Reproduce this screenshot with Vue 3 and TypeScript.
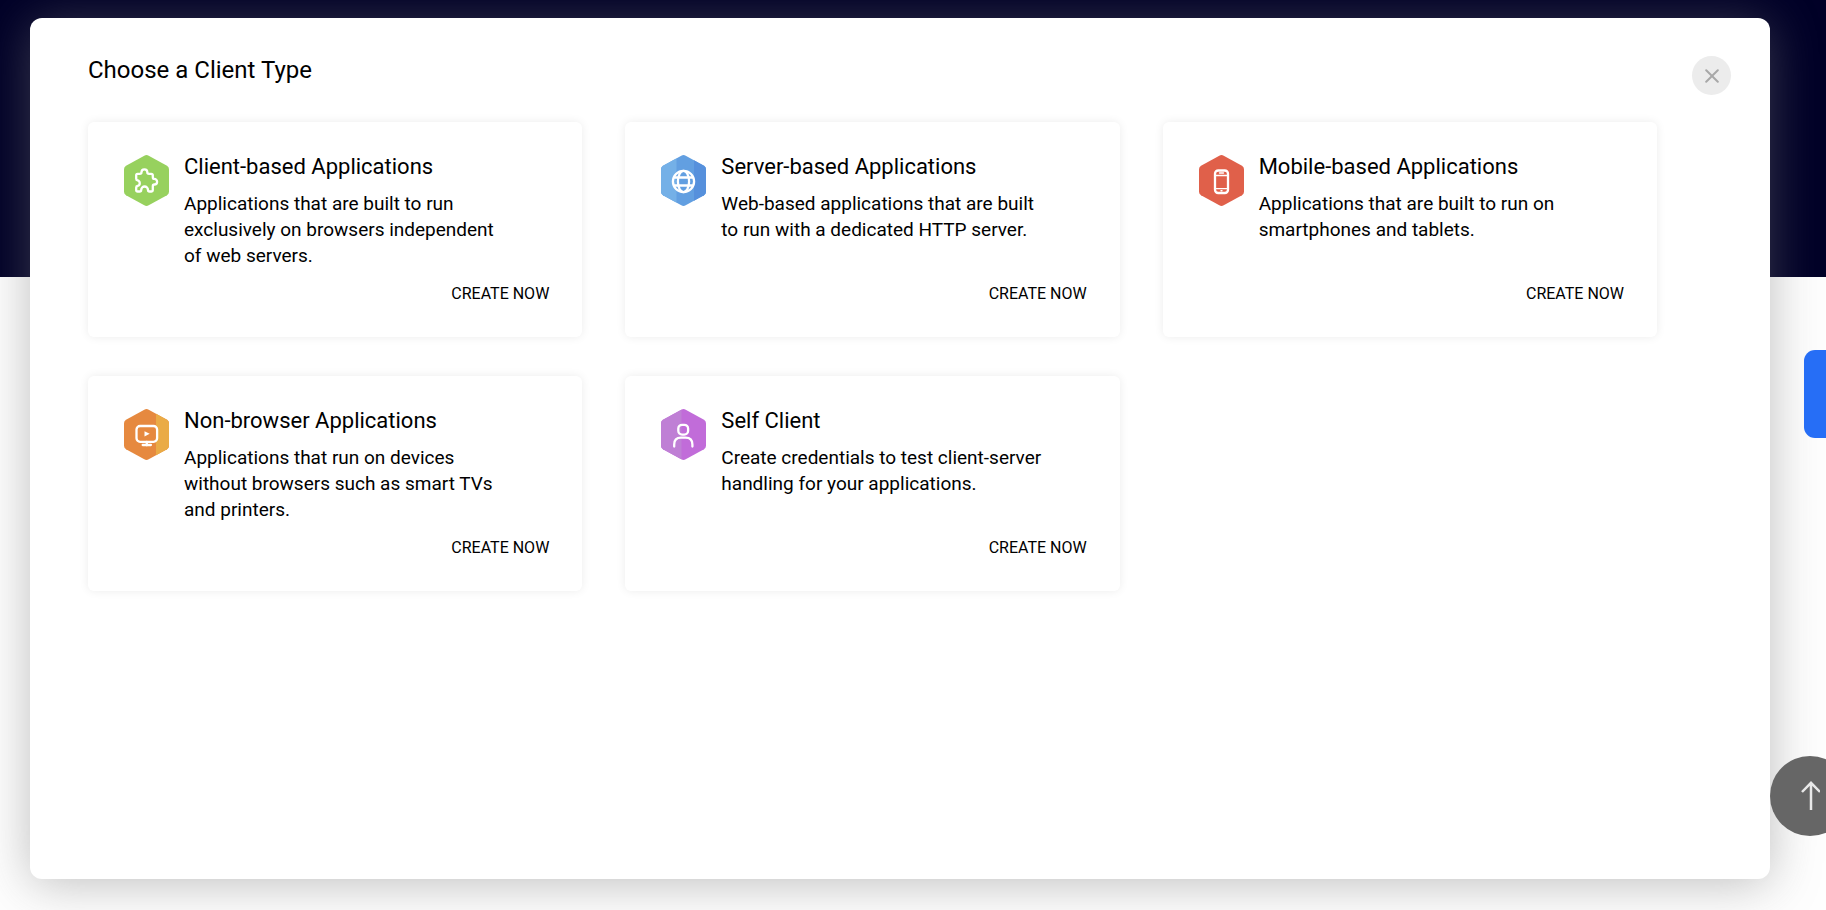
<script setup lang="ts">
type IconName = 'puzzle' | 'globe' | 'phone' | 'monitor' | 'person'

interface ClientType {
  title: string
  description: string
  icon: IconName
  base: string
  left?: string
  leftWidth?: number
  right?: string
  rightStart?: number
}

const clientTypes: ClientType[] = [
  {
    title: 'Client-based Applications',
    description: 'Applications that are built to run exclusively on browsers independent of web servers.',
    icon: 'puzzle',
    base: '#97d15e',
  },
  {
    title: 'Server-based Applications',
    description: 'Web-based applications that are built to run with a dedicated HTTP server.',
    icon: 'globe',
    base: '#629fe1',
    left: '#74b0e7',
    leftWidth: 15.5,
    right: '#5690dc',
    rightStart: 33,
  },
  {
    title: 'Mobile-based Applications',
    description: 'Applications that are built to run on smartphones and tablets.',
    icon: 'phone',
    base: '#e0604a',
  },
  {
    title: 'Non-browser Applications',
    description: 'Applications that run on devices without browsers such as smart TVs and printers.',
    icon: 'monitor',
    base: '#e6893f',
    right: '#eaab46',
    rightStart: 32,
  },
  {
    title: 'Self Client',
    description: 'Create credentials to test client-server handling for your applications.',
    icon: 'person',
    base: '#c16cd9',
    left: '#bf7fd5',
    leftWidth: 20.5,
  },
]

const hexagon =
  'M20.3 0.7 Q22.5 -0.5 24.7 0.7 L43 10.8 Q45 12 45 14.2 V36.8 Q45 39 43 40.2 L24.7 50.3 Q22.5 51.5 20.3 50.3 L2 40.2 Q0 39 0 36.8 V14.2 Q0 12 2 10.8 Z'
</script>

<template>
  <div class="page">
    <div class="hero"></div>

    <main class="dialog" role="dialog" aria-labelledby="dialog-title">
      <header class="dialog-header">
        <h1 id="dialog-title">Choose a Client Type</h1>
        <button class="close" type="button" aria-label="Close">
          <svg width="14" height="14" viewBox="0 0 14 14" aria-hidden="true">
            <path d="M1.2 1.2 12.8 12.8M12.8 1.2 1.2 12.8" />
          </svg>
        </button>
      </header>

      <div class="cards">
        <article v-for="(item, i) in clientTypes" :key="item.title" class="card">
          <svg class="badge" width="45" height="51" viewBox="0 0 45 51" aria-hidden="true">
            <defs>
              <clipPath :id="'hex-' + i"><path :d="hexagon" /></clipPath>
            </defs>
            <g :clip-path="`url(#hex-${i})`">
              <rect width="45" height="51" :fill="item.base" />
              <rect v-if="item.left" :width="item.leftWidth" height="51" :fill="item.left" />
              <rect v-if="item.right" :x="item.rightStart" width="20" height="51" :fill="item.right" />
            </g>
            <g class="glyph">
              <path
                v-if="item.icon === 'puzzle'"
                d="M13.4 18.8 h2.4 c1.6 0 1.7-.8 1.7-1.6 a2.9 2.9 0 0 1 5.8 0 c0 .8 .1 1.6 1.7 1.6 h2.2 q1.6 0 1.6 1.6 v1.8 c0 1.6 .8 1.7 1.5 1.7 a2.8 2.8 0 0 1 0 5.6 c-.7 0-1.5 .1-1.5 1.7 v4 q0 1.3-1.3 1.3 h-2 c-1.2 0-1.5-.6-1.5-1.6 a3.4 3.4 0 0 0-6.8 0 c0 1-.3 1.6-1.5 1.6 h-2 q-1.5 0-1.5-1.5 v-2.4 c0-1.3 .6-1.5 1.4-1.6 a2.9 2.9 0 0 0 0-5.6 c-.8-.1-1.4-.5-1.4-1.6 v-3.4 q0-1.6 1.2-1.6 Z"
              />
              <template v-else-if="item.icon === 'globe'">
                <circle cx="22.5" cy="26.5" r="10.6" />
                <ellipse cx="22.5" cy="26.5" rx="5.6" ry="10.6" />
                <path d="M13.2 22.5 h18.6 M13.2 30.5 h18.6" />
              </template>
              <template v-else-if="item.icon === 'phone'">
                <rect x="16" y="15.5" width="13" height="22.5" rx="3.2" />
                <path d="M16 20.5 h13 M16 33.6 h13 M20.5 18 h4 M22 35.8 h1" class="thin" />
              </template>
              <template v-else-if="item.icon === 'monitor'">
                <rect x="12.5" y="17" width="20.6" height="15.8" rx="3.6" />
                <path d="M22.8 33 v3.4 M18.7 36 h8.2" />
                <path d="M20.5 22.2 25.7 24.8 20.5 27.4 Z" class="solid" />
              </template>
              <template v-else>
                <rect x="17.3" y="15.8" width="9.8" height="9.8" rx="3.8" />
                <path d="M13.2 37.5 v-2.1 q0-6.8 6.8-6.8 h4.6 q6.8 0 6.8 6.8 V37.5" />
              </template>
            </g>
          </svg>

          <div class="text">
            <h2>{{ item.title }}</h2>
            <p>{{ item.description }}</p>
          </div>

          <button class="create" type="button">CREATE NOW</button>
        </article>
      </div>
    </main>

    <button class="side-tab" type="button" aria-label="Open side panel"></button>
    <button class="to-top" type="button" aria-label="Back to top">
      <svg width="20" height="30" viewBox="0 0 20 30" aria-hidden="true">
        <path d="M11 29 V2 M2 11 11 1.8 20 11" />
      </svg>
    </button>
  </div>
</template>

<style>
body {
  margin: 0;
}
</style>

<style scoped>
.page {
  position: relative;
  display: flex;
  box-sizing: border-box;
  min-height: 100vh;
  padding: 18px 56px 31px 30px;
  overflow: hidden;
  background: #fefefe;
  color: #000;
  font-family: Roboto, 'Liberation Sans', sans-serif;
}

.hero {
  position: absolute;
  inset: 0 0 auto;
  height: 277px;
  background: #010027;
}

.dialog {
  position: relative;
  flex: 1;
  border-radius: 12px;
  background: #fff;
  box-shadow: 0 4px 50px rgba(120, 120, 120, 0.48);
}

.dialog-header {
  display: flex;
  align-items: flex-start;
  justify-content: space-between;
  padding: 38px 39px 27px 58px;
}

h1,
h2,
p {
  margin: 0;
  font-weight: 400;
}

h1 {
  font-size: 24px;
  line-height: 28px;
}

button {
  padding: 0;
  border: 0;
  font: inherit;
  color: inherit;
  cursor: pointer;
}

.close {
  display: grid;
  place-items: center;
  width: 39px;
  height: 39px;
  border-radius: 50%;
  background: #ececec;
}

.close path {
  fill: none;
  stroke: #a8a8a8;
  stroke-width: 2;
  stroke-linecap: round;
}

.cards {
  display: grid;
  grid-template-columns: repeat(3, 1fr);
  gap: 39px 43px;
  padding: 0 113px 58px 58px;
}

.card {
  display: grid;
  grid-template-columns: auto 1fr;
  column-gap: 15px;
  padding: 33px 33px 33px 36px;
  border-radius: 6px;
  background: #fff;
  box-shadow: 0 0 10px rgba(0, 0, 0, 0.08);
}

.glyph {
  fill: none;
  stroke: #fff;
  stroke-width: 2.3;
  stroke-linecap: round;
  stroke-linejoin: round;
}

.glyph .thin {
  stroke-width: 1.4;
}

.glyph .solid {
  fill: #fff;
  stroke: none;
}

.text {
  max-width: 325px;
  min-height: 115px;
}

h2 {
  margin-bottom: 12px;
  font-size: 22px;
  line-height: 24px;
}

p {
  font-size: 19px;
  line-height: 26px;
}

.create {
  grid-column: 2;
  justify-self: end;
  margin-top: 14px;
  background: none;
  font-size: 16px;
  line-height: 20px;
}

.side-tab {
  position: absolute;
  top: 350px;
  right: 0;
  width: 22px;
  height: 88px;
  border-radius: 11px 0 0 11px;
  background: #266ef6;
}

.to-top {
  position: absolute;
  right: -24px;
  bottom: 74px;
  display: grid;
  place-items: center;
  width: 80px;
  height: 80px;
  border-radius: 50%;
  background: #666;
}

.to-top path {
  fill: none;
  stroke: #e8e8e8;
  stroke-width: 2.5;
}
</style>
